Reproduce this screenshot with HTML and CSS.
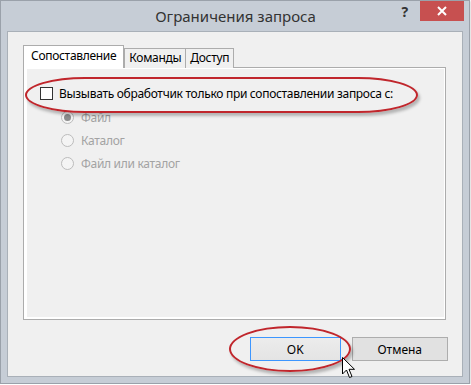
FILE: index.html
```html
<!DOCTYPE html>
<html>
<head>
    <meta charset="utf-8" />
    <title>Ограничения запроса</title>
    <link rel="stylesheet" href="styles.css">
</head>
<body>
    <div class="ablak">
        <div class="fejlec">
            <div></div>
            <div class="cim">Ограничения запроса</div>
            <div class="gombok">
                <span class="sugo">?</span>
                <span class="bezar">
                    <svg width="10" height="10" viewBox="0 0 10 10">
                        <path d="M1 1 L9 9 M9 1 L1 9" stroke="#fff" stroke-width="2" />
                    </svg>
                </span>
            </div>
        </div>
        <div class="kliens">
            <div class="fulek">
                <div class="ful aktiv">Сопоставление</div>
                <div class="ful">Команды</div>
                <div class="ful">Доступ</div>
            </div>
            <div class="panel">
                <div class="lap">
                    <div class="sor">
                        <span class="jelolo"></span>
                        <span>Вызывать обработчик только при сопоставлении запроса с:</span>
                    </div>
                    <div class="valasztok">
                        <div class="radio-sor"><span class="radio be"></span>Файл</div>
                        <div class="radio-sor"><span class="radio"></span>Каталог</div>
                        <div class="radio-sor"><span class="radio"></span>Файл или каталог</div>
                    </div>
                </div>
            </div>
            <div class="also">
                <button class="gomb alap">OK</button>
                <button class="gomb">Отмена</button>
            </div>
        </div>

        <div class="kiemeles kiemeles-jelolo"></div>
        <div class="kiemeles kiemeles-ok"></div>
        <svg class="kurzor" width="14" height="22" viewBox="0 0 14 22">
            <path d="M0.5 0.5 L0.5 17 L4.5 13 L7.5 20.5 L10 19.5 L7 12.3 L12.5 12.3 Z" fill="#fff" stroke="#000" stroke-width="1" stroke-linejoin="round" />
        </svg>
    </div>
</body>
</html>
```

FILE: styles.css
```css
* {
    margin: 0;
    padding: 0;
    box-sizing: border-box;
}

body {
    background: #fff;
    font-family: "Noto Sans", "Open Sans", sans-serif;
    font-size: 12px;
    letter-spacing: -0.3px;
    color: #000;
}

.ablak {
    position: relative;
    width: 470px;
    height: 384px;
    background: #c6cdd6;
    border: 1px solid #9aa1aa;
    display: flex;
    flex-direction: column;
    padding: 0 6px 6px 6px;
    box-shadow: 1px 1px 2px rgba(0, 0, 0, 0.15);
}

.fejlec {
    height: 30px;
    display: grid;
    grid-template-columns: 1fr auto 1fr;
    margin-right: -1px;
}

.cim {
    font-size: 15px;
    letter-spacing: 0;
    color: #333;
    line-height: 30px;
}

.gombok {
    display: flex;
    justify-content: flex-end;
    align-items: flex-start;
}

.sugo {
    font-size: 14px;
    font-weight: bold;
    color: #333;
    line-height: 20px;
    margin-right: 12px;
    margin-top: 1px;
}

.bezar {
    width: 44px;
    height: 20px;
    background: #c75050;
    display: flex;
    align-items: center;
    justify-content: center;
}

.kliens {
    flex: 1;
    background: #f0f0f0;
    border: 1px solid #a9b0b8;
    padding: 14px 14px 0 15px;
    display: flex;
    flex-direction: column;
}

.fulek {
    display: flex;
    align-items: flex-end;
    height: 22px;
    margin-bottom: -1px;
    position: relative;
    z-index: 1;
}

.ful {
    height: 20px;
    line-height: 17px;
    padding: 0 4px;
    border: 1px solid #acacac;
    border-bottom: none;
    background: #f0f0f0;
    margin-left: -1px;
}

.ful.aktiv {
    height: 23px;
    line-height: 20px;
    padding: 0 7px;
    background: #fff;
    margin-left: 0;
    margin-right: 1px;
}

.panel {
    width: 423px;
    height: 253px;
    border: 1px solid #acacac;
    background: #fff;
    padding: 1px 1px 2px 3px;
}

.lap {
    height: 100%;
    background: #f0f0f0;
    padding: 18px 0 0 13px;
}

.sor {
    display: flex;
    align-items: center;
    gap: 6px;
    height: 13px;
}

.jelolo {
    width: 13px;
    height: 13px;
    border: 1px solid #333;
    background: #fff;
}

.valasztok {
    padding: 6px 0 0 21px;
    color: #a3a3a3;
}

.radio-sor {
    display: flex;
    align-items: center;
    gap: 7px;
    height: 23px;
}

.radio {
    width: 13px;
    height: 13px;
    border-radius: 50%;
    border: 1px solid #bcbcbc;
    background: #f4f4f4;
    display: flex;
    align-items: center;
    justify-content: center;
}

.radio.be::after {
    content: "";
    width: 7px;
    height: 7px;
    border-radius: 50%;
    background: #8c8c8c;
}

.also {
    display: flex;
    gap: 11px;
    margin-top: 17px;
    padding-left: 227px;
}

.gomb {
    height: 24px;
    font-family: inherit;
    font-size: 12px;
    letter-spacing: 0;
    color: #000;
    background: #e1e1e1;
    border: 1px solid #adadad;
}

.gomb.alap {
    width: 91px;
    background: linear-gradient(#ececec, #e4e4e4);
    border: 1px solid #3c96ff;
}

.gomb:not(.alap) {
    width: 97px;
}

.kiemeles {
    position: absolute;
    border: 2px solid #c0262c;
    box-shadow: 2px 3px 3px rgba(0, 0, 0, 0.25);
}

.kiemeles-jelolo {
    left: 24px;
    top: 76px;
    width: 393px;
    height: 36px;
    border-radius: 60px / 18px;
}

.kiemeles-ok {
    left: 228px;
    top: 325px;
    width: 122px;
    height: 46px;
    border-radius: 50%;
}

.kurzor {
    position: absolute;
    left: 341px;
    top: 356px;
}
```
